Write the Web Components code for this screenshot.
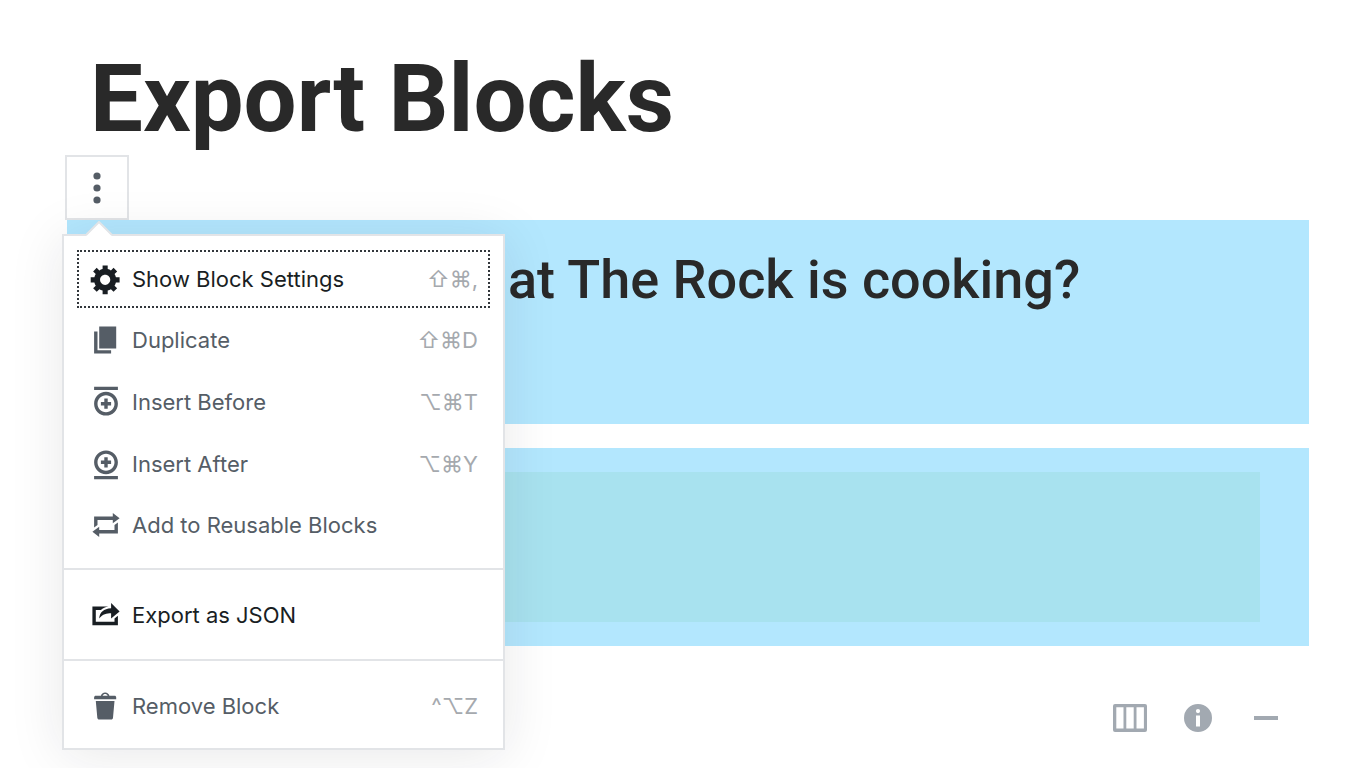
<!DOCTYPE html>
<html lang="en">
<head>
<meta charset="utf-8">
<meta name="viewport" content="width=device-width, initial-scale=1">
<title>Export Blocks</title>
<style>
  html, body { margin: 0; }
  body { background: #fff; color: #292929; font-family: Roboto, "Liberation Sans", sans-serif; }
</style>
</head>
<body>
<block-editor>
  <editor-title slot="title">Export Blocks</editor-title>
  <block-toolbar slot="toolbar"></block-toolbar>
  <color-block><h2>hat The Rock is cooking?</h2></color-block>
  <color-block nested></color-block>
  <block-menu slot="menu">
    <menu-section>
      <menu-item icon="settings" keys="⇧⌘," active>Show Block Settings</menu-item>
      <menu-item icon="duplicate" keys="⇧⌘D">Duplicate</menu-item>
      <menu-item icon="before" keys="⌥⌘T">Insert Before</menu-item>
      <menu-item icon="after" keys="⌥⌘Y">Insert After</menu-item>
      <menu-item icon="repeat">Add to Reusable Blocks</menu-item>
    </menu-section>
    <menu-section>
      <menu-item icon="export" strong>Export as JSON</menu-item>
    </menu-section>
    <menu-section>
      <menu-item icon="trash" keys="^⌥Z">Remove Block</menu-item>
    </menu-section>
  </block-menu>
  <block-shortcuts slot="footer"></block-shortcuts>
</block-editor>

<script>
const ICONS = {
  settings: 'M18 12h-2.18c-.17.7-.44 1.35-.81 1.93l1.54 1.54-2.1 2.1-1.54-1.54c-.58.36-1.23.63-1.91.79V19H8v-2.18c-.68-.16-1.33-.43-1.91-.79l-1.54 1.54-2.12-2.12 1.54-1.54c-.36-.58-.63-1.23-.79-1.91H1V9.03h2.17c.16-.7.44-1.35.8-1.94L2.43 5.55l2.1-2.1 1.54 1.54c.58-.37 1.24-.64 1.93-.81V2h3v2.18c.68.16 1.33.43 1.91.79l1.54-1.54 2.12 2.12-1.54 1.54c.36.59.64 1.24.8 1.94H18V12zm-8.5 1.5c1.66 0 3-1.34 3-3s-1.34-3-3-3-3 1.34-3 3 1.34 3 3 3z',
  duplicate: 'M6 15V2h10v13H6zm-1 1h8v2H3V5h2v11z',
  before: 'M11 8H9v2H7v2h2v2h2v-2h2v-2h-2V8zm-1-4c-3.9 0-7 3.1-7 7s3.1 7 7 7 7-3.1 7-7-3.1-7-7-7zm0 12c-2.8 0-5-2.2-5-5s2.2-5 5-5 5 2.2 5 5-2.2 5-5 5zM3 1v2h14V1H3z',
  after: 'M9 12h2v-2h2V8h-2V6H9v2H7v2h2v2zm1 4c3.9 0 7-3.1 7-7s-3.1-7-7-7-7 3.1-7 7 3.1 7 7 7zm0-12c2.8 0 5 2.2 5 5s-2.2 5-5 5-5-2.2-5-5 2.2-5 5-5zM3 19h14v-2H3v2z',
  repeat: 'M5 7v3l-2 1.5V5h11V3l4 3.01L14 9V7H5zm10 6v-3l2-1.5V15H6v2l-4-3.01L6 11v2h9z',
  export: 'M18 8l-5 4V9.01c-2.58.06-4.88.45-7 2.99.29-3.57 2.66-5.66 7-5.94V3zM4 14h11v-2l2-1.6V16H2V5h9.43c-1.83.32-3.31 1-4.41 2H4v7z',
  trash: 'M12 4h3c.6 0 1 .4 1 1v1H3V5c0-.6.5-1 1-1h3c.2-1.1 1.3-2 2.5-2s2.3.9 2.5 2zM8 4h3c-.2-.6-.9-1-1.5-1S8.2 3.4 8 4zM4 7h11l-.9 10.1c0 .5-.5.9-1 .9H5.9c-.5 0-.9-.4-1-.9L4 7z'
};

function define(name, render) {
  customElements.define(name, class extends HTMLElement {
    constructor() {
      super();
      this.attachShadow({ mode: 'open' }).innerHTML = render(this);
    }
  });
}

define('block-editor', () => `
  <style>
    :host { display: block; box-sizing: border-box; min-height: 100vh; padding: 43px 57px 24px 67px; }
    .blocks { position: relative; display: grid; gap: 24px; }
    .menu { position: absolute; top: 14px; left: -5px; }
    slot[name="toolbar"] { display: block; margin-left: -2px; }
  </style>
  <main>
    <slot name="title"></slot>
    <slot name="toolbar"></slot>
    <div class="blocks">
      <slot></slot>
      <div class="menu"><slot name="menu"></slot></div>
    </div>
    <slot name="footer"></slot>
  </main>`);

define('editor-title', () => `
  <style>
    :host { display: block; padding: 0 23px; }
    h1 { margin: 0; font-size: 94px; line-height: 112px; font-weight: 700; }
  </style>
  <h1><slot></slot></h1>`);

define('block-toolbar', () => `
  <style>
    :host { display: flex; }
    button { display: grid; place-items: center; width: 64px; height: 65px; padding: 0; background: #fff; border: 2px solid #e2e4e7; color: #555d66; }
    svg { display: block; fill: currentColor; }
  </style>
  <button type="button" aria-label="More options" aria-expanded="true">
    <svg width="34" height="34" viewBox="0 0 34 34"><circle cx="17" cy="5" r="3.6"/><circle cx="17" cy="17" r="3.6"/><circle cx="17" cy="29" r="3.6"/></svg>
  </button>`);

define('color-block', el => `
  <style>
    :host { display: block; box-sizing: border-box; background: #b3e7fe; min-height: 204px; padding: 24px 24px 24px 411px; }
    :host([nested]) { min-height: 198px; padding: 24px 49px; }
    ::slotted(h2) { margin: 0; font-size: 54px; line-height: 71px; font-weight: 500; }
    .inner { height: 150px; background: #a8e2ef; }
  </style>
  ${el.hasAttribute('nested') ? '<div class="inner"></div>' : '<slot></slot>'}`);

define('block-menu', () => `
  <style>
    :host { display: block; position: relative; box-sizing: border-box; width: 443px; background: #fff; border: 2px solid #e2e4e7; box-shadow: 0 5px 51px rgba(25, 30, 35, .1); font-family: Inter, "Liberation Sans", sans-serif; }
    .arrow { position: absolute; left: 22px; top: -15px; display: block; }
  </style>
  <svg class="arrow" width="28" height="16" viewBox="0 0 28 16" aria-hidden="true">
    <path d="M0 15L13 1L26 15V16H0z" fill="#fff"/><path d="M0 14L13 1L26 14" fill="none" stroke="#e2e4e7" stroke-width="2"/>
  </svg>
  <div role="menu"><slot></slot></div>`);

define('menu-section', () => `
  <style>
    :host { display: grid; grid-auto-rows: 61px; padding: 14px 13px; }
    :host(:first-child) { padding: 12px 13px; min-height: 308px; grid-auto-rows: 1fr; }
    :host(:last-child) { padding-bottom: 12px; }
    :host(:not(:first-child)) { border-top: 2px solid #e2e4e7; }
  </style>
  <slot></slot>`);

define('menu-item', el => `
  <style>
    :host { display: flex; align-items: center; color: #555d66; }
    :host([active]), :host([strong]) { color: #191e23; }
    button { flex: 1; display: flex; align-items: center; gap: 9px; box-sizing: border-box; height: 58px; padding: 0 12px; border: 0; outline: 0; background: none; color: inherit; font: 22px/30px Inter, "Liberation Sans", sans-serif; text-align: left; }
    :host([active]) button { outline: 2px dotted #32373c; outline-offset: -2px; }
    svg { flex: none; fill: currentColor; }
    kbd { margin-left: auto; font: inherit; color: #a5a9ae; }
  </style>
  <button type="button" role="menuitem">
    <svg width="34" height="34" viewBox="0 0 20 20" aria-hidden="true"><path d="${ICONS[el.getAttribute('icon')]}"/></svg>
    <span><slot></slot></span>
    ${el.hasAttribute('keys') ? `<kbd>${el.getAttribute('keys')}</kbd>` : ''}
  </button>`);

define('block-shortcuts', () => `
  <style>
    :host { display: flex; justify-content: flex-end; gap: 20px; padding: 48px 19px 0 0; color: #a2a9b1; }
    button { display: grid; place-items: center; width: 48px; height: 48px; padding: 0; border: 0; background: none; color: inherit; }
    svg { display: block; fill: currentColor; }
  </style>
  <button type="button" aria-label="Columns"><svg width="34" height="28" viewBox="0 0 34 28"><path fill-rule="evenodd" d="M2 0h30a2 2 0 0 1 2 2v24a2 2 0 0 1-2 2H2a2 2 0 0 1-2-2V2a2 2 0 0 1 2-2zm1.300 3.300v21.200h7.200V3.300zm10 0v21.200h7.400V3.300zm10.200 0v21.200h7.400V3.300z"/></svg></button>
  <button type="button" aria-label="Information"><svg width="28" height="28" viewBox="0 0 28 28"><path fill-rule="evenodd" d="M14 0a14 14 0 1 0 0 28a14 14 0 1 0 0-28zm0 5a2.100 2.100 0 1 1 0 4.200a2.100 2.100 0 1 1 0-4.200zM12 11.500h4v11h-4z"/></svg></button>
  <button type="button" aria-label="Separator"><svg width="24" height="4" viewBox="0 0 24 4"><path d="M0 0h24v4H0z"/></svg></button>`);
</script>
</body>
</html>
